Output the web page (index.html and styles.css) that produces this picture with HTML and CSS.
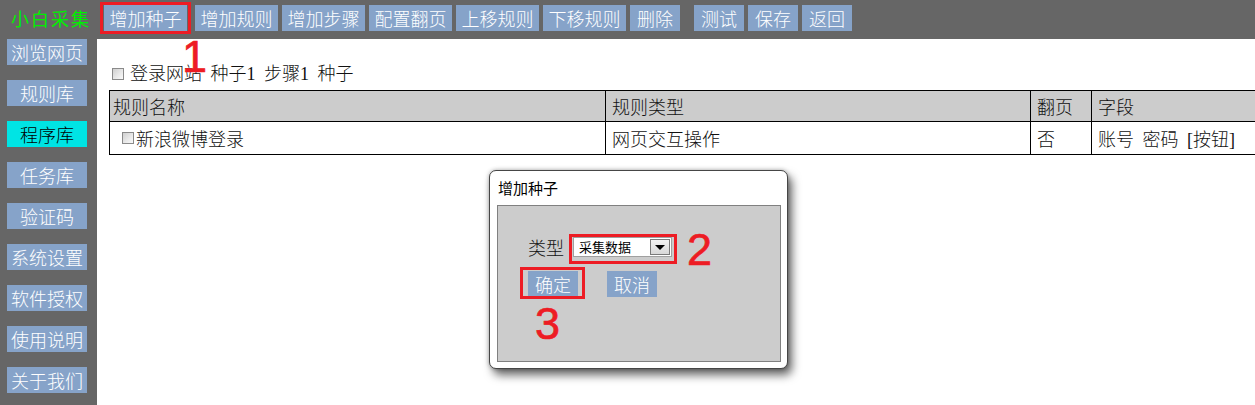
FILE: index.html
```html
<!DOCTYPE html>
<html lang="zh-CN">
<head>
<meta charset="utf-8">
<title>小白采集</title>
<link rel="stylesheet" href="styles.css">
</head>
<body>
<div class="app">
  <header class="topbar">
    <div class="brand">小白采集</div>
    <nav class="toolbar">
      <span class="hl-box"><span class="btn">增加种子</span></span>
      <span class="btn">增加规则</span>
      <span class="btn">增加步骤</span>
      <span class="btn">配置翻页</span>
      <span class="btn">上移规则</span>
      <span class="btn">下移规则</span>
      <span class="btn btn-short">删除</span>
      <span class="btn btn-short btn-sep">测试</span>
      <span class="btn btn-short">保存</span>
      <span class="btn btn-short">返回</span>
    </nav>
  </header>
  <div class="main">
    <aside class="sidebar">
      <span class="side-btn">浏览网页</span>
      <span class="side-btn">规则库</span>
      <span class="side-btn active">程序库</span>
      <span class="side-btn">任务库</span>
      <span class="side-btn">验证码</span>
      <span class="side-btn">系统设置</span>
      <span class="side-btn">软件授权</span>
      <span class="side-btn">使用说明</span>
      <span class="side-btn">关于我们</span>
    </aside>
    <section class="content">
      <div class="path"><span class="cb"></span><span>登录网站 种子1 步骤1 种子</span></div>
      <table class="rules">
        <colgroup>
          <col class="c-name">
          <col class="c-type">
          <col class="c-page">
          <col class="c-field">
        </colgroup>
        <thead>
          <tr><th class="first">规则名称</th><th>规则类型</th><th>翻页</th><th>字段</th></tr>
        </thead>
        <tbody>
          <tr><td class="first"><span class="cell-check"><span class="cb cb-row"></span>新浪微博登录</span></td><td>网页交互操作</td><td>否</td><td>账号 密码 [按钮]</td></tr>
        </tbody>
      </table>
    </section>
  </div>

  <div class="mark mark-1">1</div>

  <div class="dialog">
    <div class="dialog-title">增加种子</div>
    <div class="dialog-body">
      <div class="field-row">
        <span class="field-label">类型</span>
        <div class="select"><span class="select-text">采集数据</span><span class="select-arrow"></span></div>
      </div>
      <div class="btn-row">
        <span class="btn btn-short">确定</span>
        <span class="btn btn-short">取消</span>
      </div>
    </div>
    <div class="hl-abs hl-select"></div>
    <div class="hl-abs hl-ok"></div>
    <div class="mark mark-2">2</div>
    <div class="mark mark-3">3</div>
  </div>
</div>
</body>
</html>
```

FILE: styles.css
```css
* { box-sizing: border-box; }

html, body {
  margin: 0;
  padding: 0;
  overflow: hidden;
  background: #fff;
}

body {
  width: 1255px;
  height: 405px;
  font-family: "Noto Sans CJK SC", sans-serif;
  font-weight: 300;
}

.app {
  position: relative;
  width: 1255px;
  height: 405px;
  display: flex;
  flex-direction: column;
}

/* ---------- top bar ---------- */
.topbar {
  flex: none;
  height: 39px;
  background: #666666;
  display: flex;
  align-items: flex-start;
  padding: 5px 0 0 11px;
}

.brand {
  width: 89px;
  font-size: 18px;
  line-height: 26px;
  letter-spacing: 2px;
  color: #00f000;
  font-weight: 400;
}

.toolbar {
  display: flex;
  align-items: flex-start;
  gap: 4px;
}

.btn {
  display: block;
  height: 26px;
  line-height: 26px;
  padding: 0 5.5px;
  background: #86a3c9;
  color: #ffffff;
  font-size: 18px;
  white-space: nowrap;
}

.btn-short {
  min-width: 50px;
  text-align: center;
}

.btn-sep { margin-left: 10px; }

.hl-box {
  display: flex;
  margin-top: -3px;
  padding: 0 1px;
  border: 3px solid #ed1c24;
}

/* ---------- main ---------- */
.main {
  flex: 1;
  display: flex;
  min-height: 0;
}

.sidebar {
  flex: none;
  width: 97px;
  background: #666666;
  padding-left: 7px;
  display: flex;
  flex-direction: column;
  gap: 15px;
}

.side-btn {
  display: block;
  width: 80px;
  height: 26px;
  line-height: 26px;
  text-align: center;
  background: #86a3c9;
  color: #ffffff;
  font-size: 18px;
  white-space: nowrap;
}

.side-btn.active {
  background: #00e4e4;
  color: #000000;
}

.content {
  flex: 1;
  min-width: 0;
  overflow: hidden;
  padding: 24px 0 0 12px;
  font-family: "Liberation Serif", "Noto Sans CJK SC", serif;
  font-size: 18px;
  color: #111;
}

.path {
  height: 22px;
  line-height: 22px;
  display: flex;
  align-items: center;
  padding-left: 3px;
  white-space: pre;
  word-spacing: 4px;
}

.cb {
  flex: none;
  display: inline-block;
  width: 12px;
  height: 12px;
  margin-right: 6px;
  border: 1px solid #8a8a8a;
  background: linear-gradient(135deg, #cfcfcf 0%, #e8e8e8 55%, #fafafa 100%);
}

.cb-row { margin-right: 2px; }

.rules {
  margin-top: 5px;
  width: 1180px;
  border-collapse: collapse;
  table-layout: fixed;
}

.c-name { width: 496px; }
.c-type { width: 425px; }
.c-page { width: 61px; }
.c-field { width: 198px; }

.rules th,
.rules td {
  border: 1px solid #000;
  padding: 0 6px;
  text-align: left;
  font-weight: 300;
  white-space: pre;
  word-spacing: 4px;
  vertical-align: middle;
}

.rules th.first,
.rules td.first { padding-left: 3px; }

.rules th {
  background: #cccccc;
  height: 31px;
}

.rules td { height: 33px; }

.cell-check {
  display: flex;
  align-items: center;
  padding-left: 9px;
}

/* ---------- dialog ---------- */
.dialog {
  position: absolute;
  left: 489px;
  top: 170px;
  width: 299px;
  height: 199px;
  display: flex;
  flex-direction: column;
  padding: 0 6px 6px 7px;
  background: #ffffff;
  border: 1px solid #464646;
  border-radius: 7px;
  box-shadow: 4px 6px 10px rgba(0, 0, 0, 0.6), 0 0 4px rgba(0, 0, 0, 0.3);
}

.dialog-title {
  flex: none;
  height: 34px;
  line-height: 34px;
  padding-left: 1px;
  font-size: 15px;
  font-weight: 400;
  color: #000;
}

.dialog-body {
  flex: 1;
  background: #cccccc;
  border: 1px solid #808080;
  padding: 31px 0 0 30px;
}

.field-row {
  display: flex;
  align-items: center;
  height: 20px;
}

.field-label {
  margin-right: 9px;
  font-size: 18px;
  line-height: 20px;
  color: #111;
}

.select {
  width: 99px;
  height: 20px;
  display: flex;
  align-items: center;
  padding: 0 1px 0 5px;
  background: #ffffff;
  border: 1px solid #a0a0a0;
}

.select-text {
  font-size: 13px;
  line-height: 18px;
  font-weight: 400;
  color: #000;
}

.select-arrow {
  position: relative;
  margin-left: auto;
  width: 20px;
  height: 16px;
  background: linear-gradient(#f2f2f2, #d8d8d8);
  border: 1px solid #7a7a7a;
}

.select-arrow::after {
  content: "";
  position: absolute;
  left: 4px;
  top: 5px;
  border-left: 5px solid transparent;
  border-right: 5px solid transparent;
  border-top: 5px solid #000;
}

.btn-row {
  display: flex;
  gap: 29px;
  margin-top: 14px;
}

/* ---------- annotations ---------- */
.hl-abs {
  position: absolute;
  border: 3px solid #ed1c24;
}

.hl-select { left: 79px; top: 63px; width: 108px; height: 30px; }
.hl-ok { left: 30px; top: 96px; width: 65px; height: 32px; }

.mark {
  position: absolute;
  font-family: "Liberation Sans", Arial, sans-serif;
  font-weight: 400;
  -webkit-text-stroke: 0.7px #ed1c24;
  font-size: 45px;
  line-height: 45px;
  color: #ed1c24;
}

.mark-1 { left: 182px; top: 34px; }
.mark-2 { left: 197px; top: 56px; }
.mark-3 { left: 45px; top: 130px; }
```
